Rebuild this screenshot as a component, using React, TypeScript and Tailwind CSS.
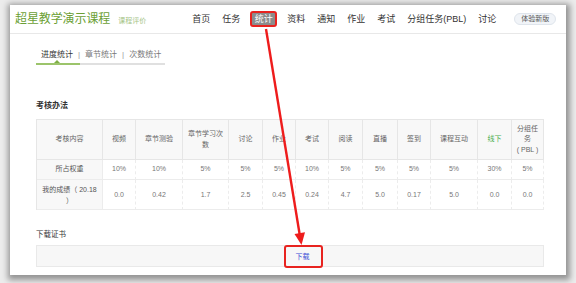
import React from "react";

const headers = ["考核内容", "视频", "章节测验", "章节学习次\n数", "讨论", "作业", "考试", "阅读", "直播", "签到", "课程互动", "线下", "分组任\n务\n( PBL )"];
const weights = ["所占权重", "10%", "10%", "5%", "5%", "5%", "10%", "5%", "5%", "5%", "5%", "30%", "5%"];
const scores = ["我的成绩（ 20.18\n）", "0.0", "0.42", "1.7", "2.5", "0.45", "0.24", "4.7", "5.0", "0.17", "5.0", "0.0", "0.0"];

const navItems = ["首页", "任务", "统计", "资料", "通知", "作业", "考试", "分组任务(PBL)", "讨论"];

export default function App() {
  return (
    <div className="relative w-[576px] h-[283px] overflow-hidden bg-[#ececec] font-['Liberation_Sans','Noto_Sans_CJK_SC',sans-serif] pt-[5px] pl-[10px]">
      <div className="w-[556px] h-[270px] bg-white shadow-[1px_2px_6px_3px_rgba(0,0,0,0.38)] flex flex-col">
        {/* header */}
        <div className="h-[29px] shrink-0 border-b border-[#e8e8e8] flex items-center pl-[5px]">
          <span className="text-[12px] leading-[14px] text-[#6c9f35] tracking-[-0.1px]">超星教学演示课程</span>
          <span className="ml-[8px] text-[7px] leading-[9px] text-[#a5c487] mt-[2px]">课程评价</span>
          <div className="ml-[46px] flex items-center gap-[12px] text-[9px] leading-[12px] text-[#333]">
            {navItems.map((n) =>
              n === "统计" ? (
                <span key={n} className="relative bg-[#8c8c8c] text-white px-[2.5px] h-[12px]">
                  {n}
                  <span className="absolute -inset-[2px] border-2 border-[#e8231f] rounded-[3px]" />
                </span>
              ) : (
                <span key={n}>{n}</span>
              )
            )}
            <span className="ml-[6px] h-[12px] px-[6px] rounded-full bg-[#f1f4f8] border border-[#dfe5ec] text-[7px] leading-[10px] text-[#555] flex items-center">体验新版</span>
          </div>
        </div>

        {/* content */}
        <div className="pl-[26px] pt-[15px] flex flex-col">
          <div className="w-[129px] flex flex-col">
            <div className="pl-[5px] flex items-center text-[8px] leading-[11px] text-[#777]">
              <span className="text-[#333]">进度统计</span>
              <span className="mx-[5px] text-[#999]">|</span>
              <span>章节统计</span>
              <span className="mx-[5px] text-[#999]">|</span>
              <span>次数统计</span>
            </div>
            <div className="relative mt-[3px] h-[2px] bg-[#e0e0e0]">
              <div className="h-[2px] w-[44px] bg-[#9cc46b]" />
              <div className="absolute left-[18px] -top-[3px] w-0 h-0 border-l-[3px] border-r-[3px] border-b-[3px] border-l-transparent border-r-transparent border-b-[#7fae45]" />
            </div>
          </div>

          <div className="mt-[35px] text-[8px] leading-[11px] text-[#333] font-bold">考核办法</div>

          <div className="mt-[8px] w-[508px] grid grid-cols-[66px_33px_47px_46px_34px_33px_33px_34px_35px_33px_47px_34px_32px] grid-rows-[40px_20px_30px] border-l border-t border-[#e6e6e6] text-[7px] leading-[10.5px]">
            {headers.map((h, i) => (
              <div key={"h" + i} className={`flex items-center justify-center text-center whitespace-pre-line px-[3px] border-r border-b border-[#e6e6e6] bg-[#f8f8f8] ${i === 11 ? "text-[#4caf50]" : "text-[#666]"}`}>
                {h}
              </div>
            ))}
            {weights.map((w, i) => (
              <div key={"w" + i} className={`flex items-center justify-center text-center border-b border-r border-[#ececec] [border-right-style:dashed] ${i === 0 ? "bg-[#f8f8f8] text-[#555] [border-right-style:solid]" : "bg-white text-[#777]"}`}>
                {w}
              </div>
            ))}
            {scores.map((s, i) => (
              <div key={"s" + i} className={`flex items-center justify-center text-center whitespace-pre-line leading-[11px] border-b border-r border-[#ececec] [border-right-style:dashed] ${i === 0 ? "bg-[#f8f8f8] text-[#555] [border-right-style:solid]" : "bg-white text-[#777]"}`}>
                {s}
              </div>
            ))}
          </div>

          <div className="mt-[19px] text-[7.5px] leading-[11px] text-[#333]">下载证书</div>

          <div className="mt-[5px] w-[508px] h-[22px] bg-[#f7f7f7] border border-[#e9e9e9] flex items-center justify-center">
            <span className="relative ml-[25px] text-[7px] leading-[11px] text-[#3e4fd6]">
              下载
              <span className="absolute left-[-12px] right-[-13px] top-[-6px] bottom-[-6px] border-2 border-[#e8231f] rounded-[3px]" />
            </span>
          </div>
        </div>
      </div>

      <svg className="absolute left-0 top-0 pointer-events-none" width="576" height="283" viewBox="0 0 576 283">
        <line x1="266" y1="29" x2="299.6" y2="234" stroke="#ee1c1c" strokeWidth="2.4" />
        <polygon points="301.5,245 305,232.3 294.5,233.9" fill="#ee1c1c" />
      </svg>
    </div>
  );
}
